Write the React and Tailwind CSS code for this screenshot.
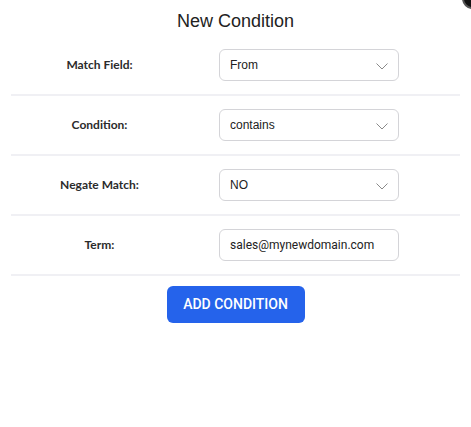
import { useState } from "react";

const Chevron = () => (
  <svg width="12" height="7" viewBox="0 0 12 7" fill="none" className="pointer-events-none absolute right-[11px] top-[14px]">
    <path d="M0.5 0.5l5.5 5.5L11.5 0.5" stroke="#8a8a8a" strokeWidth="1" />
  </svg>
);

const Row = ({ label, children }) => (
  <div className="mx-[11px] flex h-[60px] items-center border-b-2 border-[#f0f0f4]">
    <div className="w-[177px] text-center text-[12px] font-bold text-[#2b2b2b]" style={{ fontFamily: "Lato, 'Open Sans', sans-serif" }}>
      {label}
    </div>
    <div className="ml-[31px] w-[180px]">{children}</div>
  </div>
);

const SelectBox = ({ value, options, onChange }) => (
  <div className="relative">
    <select
      value={value}
      onChange={(e) => onChange(e.target.value)}
      className="h-[32px] w-full appearance-none rounded-[6px] border border-[#d4d4d8] bg-white pl-[10px] pr-8 text-[12px] text-[#222] outline-none"
      style={{ fontFamily: "'Liberation Sans', Arial, sans-serif" }}
    >
      {options.map((o) => (
        <option key={o}>{o}</option>
      ))}
    </select>
    <Chevron />
  </div>
);

export default function App() {
  const [field, setField] = useState("From");
  const [cond, setCond] = useState("contains");
  const [negate, setNegate] = useState("NO");
  const [term, setTerm] = useState("sales@mynewdomain.com");

  return (
    <div className="relative h-[427px] w-[471px] overflow-hidden bg-white">
      <div className="absolute right-[-12px] top-[-12px] h-[21px] w-[21px] rounded-full border-2 border-[#555] bg-[#111]" />
      <h1
        className="pt-[10px] text-center text-[18px] leading-[22px] text-[#222] mb-[4px]"
        style={{ fontFamily: "'Liberation Sans', Arial, sans-serif" }}
      >
        New Condition
      </h1>
      <Row label="Match Field:">
        <SelectBox value={field} onChange={setField} options={["From", "To", "Subject"]} />
      </Row>
      <Row label="Condition:">
        <SelectBox value={cond} onChange={setCond} options={["contains", "equals", "starts with"]} />
      </Row>
      <Row label="Negate Match:">
        <SelectBox value={negate} onChange={setNegate} options={["NO", "YES"]} />
      </Row>
      <Row label="Term:">
        <input
          value={term}
          onChange={(e) => setTerm(e.target.value)}
          className="h-[32px] w-full rounded-[6px] border border-[#d4d4d8] bg-white pl-[10px] text-[12px] text-[#222] outline-none"
          style={{ fontFamily: "Roboto, Arial, sans-serif" }}
        />
      </Row>
      <div className="mt-[10px] flex justify-center">
        <button
          className="h-[37px] w-[138px] rounded-[6px] bg-[#2563eb] text-[14px] font-medium text-white"
          style={{ fontFamily: "Roboto, Arial, sans-serif" }}
        >
          ADD CONDITION
        </button>
      </div>
    </div>
  );
}
